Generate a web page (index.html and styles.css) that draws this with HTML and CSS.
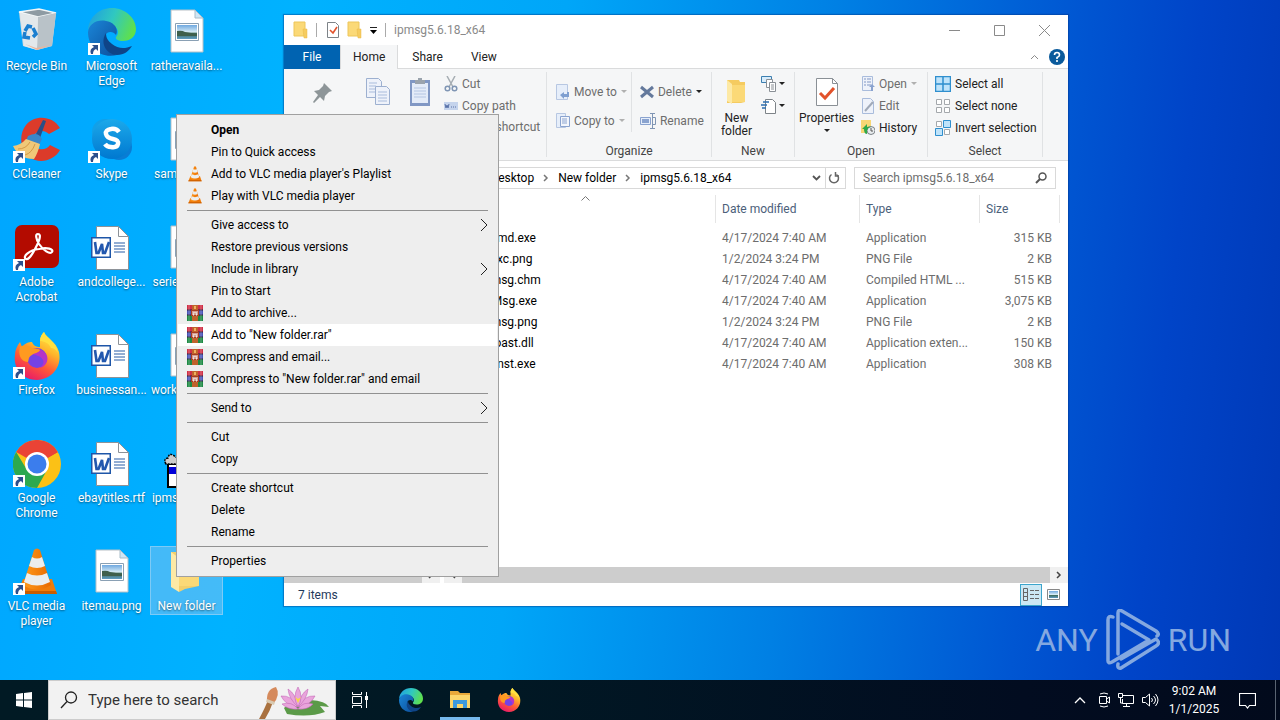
FILE: index.html
```html
<!DOCTYPE html>
<html lang="en">
<head>
  <meta charset="UTF-8">
  <meta name="viewport" content="width=device-width, initial-scale=1.0">
  <title>Desktop</title>
  <link rel="stylesheet" href="styles.css">
</head>
<body>
  <!-- shared icons -->
  <svg class="defs" width="0" height="0">
    <defs>
      <linearGradient id="g-edge1" x1="0" y1="0.2" x2="1" y2="0.5"><stop offset="0" stop-color="#1f9fe0"/><stop offset="0.5" stop-color="#30c8c0"/><stop offset="1" stop-color="#5fe04c"/></linearGradient>
      <linearGradient id="g-edge2" x1="0" y1="0" x2="1" y2="1"><stop offset="0" stop-color="#1a86d8"/><stop offset="1" stop-color="#0d4f9c"/></linearGradient>
      <linearGradient id="g-fox" x1="0.8" y1="0" x2="0.3" y2="1"><stop offset="0" stop-color="#fff44f"/><stop offset="0.35" stop-color="#ffb52a"/><stop offset="0.65" stop-color="#ff5a36"/><stop offset="1" stop-color="#e8186a"/></linearGradient>
      <linearGradient id="g-cone" x1="0" y1="0" x2="1" y2="0"><stop offset="0" stop-color="#ff9a1c"/><stop offset="1" stop-color="#e86a00"/></linearGradient>
      <linearGradient id="g-skype" x1="0" y1="0" x2="0" y2="1"><stop offset="0" stop-color="#1ca9ea"/><stop offset="1" stop-color="#0078d0"/></linearGradient>
      <linearGradient id="g-photo" x1="0" y1="0" x2="0" y2="1"><stop offset="0" stop-color="#6fa8e0"/><stop offset="0.5" stop-color="#d6ebf5"/><stop offset="0.6" stop-color="#3d6a58"/><stop offset="1" stop-color="#5f9cc4"/></linearGradient>
    </defs>
    <symbol id="i-link" viewBox="0 0 12 12">
      <path d="M0 0h12v12H0z" fill="#fff"/><path d="M4 2h6v6L8 6Q5 7 5 11H3Q1 6 6 4z" fill="#2c4f8c"/>
    </symbol>
    <symbol id="i-bin" viewBox="0 0 48 48">
      <path d="M6 4l20-3 17 4-4 33-15 4-14-4z" fill="#d7dce0"/>
      <path d="M6 4l20-3 17 4-18 4z" fill="#8e9ba3" stroke="#f1f5f7" stroke-width="1.500"/>
      <path d="M25 9l18-4-4 33-15 4z" fill="#b9c2c8"/>
      <path d="M7 5l18 4-1 33-13-4z" fill="#e3e8eb"/>
      <g fill="none" stroke="#1b7fd0" stroke-width="3.500"><path d="M12 23l3-5 4 1"/><path d="M20 20l3 6-3 3"/><path d="M17 30l-6-1 1-5"/></g>
      <path d="M12 36l11 4 14-3-13 5z" fill="#e9b59c"/>
    </symbol>
    <symbol id="i-edge" viewBox="0 0 48 48">
      <path d="M0 22C1 9 11 0 24 0s24 10 24 21c0 8-6 12-13 12-5 0-8-2-7-4 5-5 0-13-9-14C9 14 2 17 0 22z" fill="url(#g-edge1)"/>
      <path d="M0 24c1-8 9-13 18-11 8 1 13 8 10 14-2-3-6-4-9-2-5 4-3 18 10 22C12 51 0 39 0 24z" fill="url(#g-edge2)"/>
      <path d="M18 25c-6 9-1 21 11 22 7 0 12-4 15-9-7 3-14 3-20-2-4-3-6-6-6-11z" fill="#0f4487"/>
    </symbol>
    <symbol id="i-png" viewBox="0 0 48 48">
      <path d="M8 2h24l8 8v34H8z" fill="#fff" stroke="#b7c0c6"/><path d="M32 2v8h8z" fill="#cfe6f5" stroke="#a9bcc8"/>
      <path d="M12.500 15.500h23v17h-23z" fill="#fff" stroke="#8aa0b4"/><path d="M14 17h20v14H14z" fill="url(#g-photo)"/><path d="M14 23q5-1 8 1l12 2v2H14z" fill="#3f5f4c"/>
    </symbol>
    <symbol id="i-word" viewBox="0 0 48 48">
      <path d="M8.500 2.500h22l10 10v33h-32z" fill="#fff" stroke="#8d9298"/><path d="M30.500 2.500v10h10z" fill="#fff" stroke="#8d9298"/>
      <path d="M26 19h11M26 22h11M26 25h11M26 28h11" stroke="#2b5fa8" stroke-width="1.200"/>
      <path d="M3 13h20v21H3z" fill="#1e56a8"/><path d="M4.500 14.500h17v18h-17z" fill="#fff"/>
      <path d="M7 18l1.500 11h2L14 20l1 9h2l4-11" fill="none" stroke="#2358ae" stroke-width="2.600"/>
    </symbol>
    <symbol id="i-cc" viewBox="0 0 48 48">
      <path d="M47 12C40 0 22-2 13 9 4 20 8 40 22 44c9 3 20-1 25-10l-10-5c-5 7-15 5-17-3-2-9 9-15 16-8z" fill="#dc3b2a"/>
      <path d="M30 4l3 1-6 17-5-2z" fill="#2a4f86"/><path d="M15 20q10-5 14 3l-3 6-13-4z" fill="#3a87c8"/>
      <path d="M13 23l14 5q-2 9-6 15Q6 43 0 30q8-1 13-7z" fill="#f0c878"/><path d="M5 33q8 0 12-7M12 39q7-2 10-11" stroke="#d49a48" fill="none"/>
    </symbol>
    <symbol id="i-skype" viewBox="0 0 48 48">
      <circle cx="17" cy="16" r="13" fill="#12a0e8"/><circle cx="31" cy="31" r="13" fill="#0a7cd4"/><circle cx="24" cy="23" r="20" fill="url(#g-skype)"/>
      <path d="M31 16q-3-4-8-3-6 1-5 5 1 4 7 5 6 1 5 5-1 4-7 3-4 0-6-3" fill="none" stroke="#fff" stroke-width="4.500"/>
    </symbol>
    <symbol id="i-pdf" viewBox="0 0 48 48">
      <rect x="2" y="1" width="44" height="43" rx="7" fill="#b30b00"/>
      <path d="M13 35c-4-2 3-9 13-10 8-2 15 0 13 3s-9-2-13-8c-3-5-4-10-1-10 4 0 1 8-3 15-3 6-7 11-9 10z" fill="none" stroke="#fff" stroke-width="2.200"/>
    </symbol>
    <symbol id="i-fox" viewBox="0 0 48 48">
      <path d="M27 9c0-4 2-7 4-9 2 6 12 9 15 20 3 14-6 27-22 28C9 48 0 36 2 23c0-5 2-9 5-13l2 5c3-4 7-5 10-5 1 3 4 5 8 5z" fill="url(#g-fox)"/>
      <circle cx="24" cy="26" r="10" fill="#7542e5"/><path d="M15 22c2-6 13-7 18 0 4 6-1 13-6 14 9-8-1-14-12-14z" fill="#b633c8"/>
      <path d="M7 15c5-3 9-1 12 1 3 1 6 0 8 2-1 3-6 3-8 5-4 2-3 5-4 7C7 30 5 21 7 15z" fill="#ff9a20"/>
      <path d="M31 0c2 6 12 9 14 21-2-4-5-5-7-5-2-5-7-7-11-7 0-4 2-7 4-9z" fill="#ffe040"/>
    </symbol>
    <symbol id="i-chrome" viewBox="0 0 48 48">
      <circle cx="24" cy="24" r="24" fill="#fbc116"/><path d="M24 24L3.200 12A24 24 0 0 1 44.800 12z" fill="#ea4335"/><path d="M24 24v-12h21z" fill="#ea4335"/>
      <path d="M14 30L3.200 12A24 24 0 0 0 24 48l10-18z" fill="#2da94f"/>
      <circle cx="24" cy="24" r="12" fill="#fff"/><circle cx="24" cy="24" r="9.500" fill="#3b7ded"/>
    </symbol>
    <symbol id="i-vlc" viewBox="0 0 48 48">
      <path d="M10 31h29l5 15H4z" fill="#f07c0a"/><path d="M5 43h38l1 3H4z" fill="#c95d00"/>
      <path d="M21 2q3-3 6 0l11 35q-14 9-28 0z" fill="url(#g-cone)"/>
      <path d="M19 9q5 3 10 0l3 9q-8 4-16 0zM14 25q10 5 20 0l3 9q-13 7-26 0z" fill="#eceeee"/>
    </symbol>
    <symbol id="i-folder" viewBox="0 0 48 48">
      <path d="M8 4h12l2 4h14v30l-14 3-6 3z" fill="#f3cf6b"/><path d="M8 4l8 6v34l-8-5z" fill="#fde9a5"/><path d="M16 20h20v18H16z" fill="#fbd977"/>
    </symbol>
    <symbol id="i-ipmsg" viewBox="0 0 48 48">
      <path d="M5 23h32v24H5z" fill="#fff" stroke="#000" stroke-width="2"/><path d="M6 27h30v7H6z" fill="#0000d8"/><path d="M4 22h34v3H4z"/>
      <path d="M3 24q-3-5 2-6 1-5 5-3l4 3v6z" fill="#ccc" stroke="#000" stroke-dasharray="2 1" stroke-width="1.500"/>
    </symbol>
    <symbol id="i-rar" viewBox="0 0 16 16">
      <path d="M0 0h16v5H0z" fill="#d02f46"/><path d="M0 5h16v5H0z" fill="#4a55b8"/><path d="M0 10h16v6H0z" fill="#1e8a44"/>
      <path d="M0 5h16M0 10h16" stroke="#30203c"/><path d="M2 0v16M14 0v16" stroke="#fff" stroke-opacity="0.300"/>
      <path d="M5 0h6v16H5z" fill="#c0622b"/><path d="M4 5h8v6H4z" fill="#a83c20"/><path d="M6 6v4h1V7h2v3h1V6" fill="none" stroke="#fff"/><path d="M7 1h2v3H7z" fill="#f0b060"/>
    </symbol>
    <symbol id="i-sfolder" viewBox="0 0 16 18">
      <path d="M1 1h11v14H1z" fill="#fbd977" stroke="#edc65a"/><path d="M10 8h4v9h-3z" fill="#f6cc60" stroke="#e8bb48" stroke-width="0.500"/>
    </symbol>
    <symbol id="i-check" viewBox="0 0 16 18">
      <path d="M2.500 1.500h8l3 3v12h-11z" fill="#fff" stroke="#7d8388"/><path d="M5 9l3 3 4-6" fill="none" stroke="#e2522b" stroke-width="1.600"/>
    </symbol>
    <symbol id="i-down" viewBox="0 0 6 4"><path d="M0 0h6L3 3z" fill="currentColor"/></symbol>
    <symbol id="i-right" viewBox="0 0 8 14"><path d="M1 1l6 6-6 6" fill="none" stroke="currentColor"/></symbol>
    <symbol id="i-crumb" viewBox="0 0 6 8"><path d="M1 1l3 3-3 3" fill="none" stroke="currentColor" stroke-width="1.500"/></symbol>
  </svg>

  <main class="desktop">
    <div class="icons">
      <button class="shortcut"><svg class="pic"><use href="#i-bin"/></svg><span>Recycle Bin</span></button>
      <button class="shortcut"><svg class="pic"><use href="#i-cc"/></svg><svg class="link"><use href="#i-link"/></svg><span>CCleaner</span></button>
      <button class="shortcut"><svg class="pic"><use href="#i-pdf"/></svg><svg class="link"><use href="#i-link"/></svg><span>Adobe Acrobat</span></button>
      <button class="shortcut"><svg class="pic"><use href="#i-fox"/></svg><svg class="link"><use href="#i-link"/></svg><span>Firefox</span></button>
      <button class="shortcut"><svg class="pic"><use href="#i-chrome"/></svg><svg class="link"><use href="#i-link"/></svg><span>Google Chrome</span></button>
      <button class="shortcut"><svg class="pic"><use href="#i-vlc"/></svg><svg class="link"><use href="#i-link"/></svg><span>VLC media player</span></button>
      <button class="shortcut"><svg class="pic"><use href="#i-edge"/></svg><svg class="link"><use href="#i-link"/></svg><span>Microsoft Edge</span></button>
      <button class="shortcut"><svg class="pic"><use href="#i-skype"/></svg><svg class="link"><use href="#i-link"/></svg><span>Skype</span></button>
      <button class="shortcut"><svg class="pic"><use href="#i-word"/></svg><span>andcollege...</span></button>
      <button class="shortcut"><svg class="pic"><use href="#i-word"/></svg><span>businessan...</span></button>
      <button class="shortcut"><svg class="pic"><use href="#i-word"/></svg><span>ebaytitles.rtf</span></button>
      <button class="shortcut"><svg class="pic"><use href="#i-png"/></svg><span>itemau.png</span></button>
      <button class="shortcut"><svg class="pic"><use href="#i-png"/></svg><span>ratheravaila...</span></button>
      <button class="shortcut"><svg class="pic"><use href="#i-png"/></svg><span>samples.jpg</span></button>
      <button class="shortcut"><svg class="pic"><use href="#i-png"/></svg><span>seriesset.jpg</span></button>
      <button class="shortcut"><svg class="pic"><use href="#i-png"/></svg><span>workusers.rtf</span></button>
      <button class="shortcut"><svg class="pic"><use href="#i-ipmsg"/></svg><span>ipmsg5.6.1...</span></button>
      <button class="shortcut selected"><svg class="pic"><use href="#i-folder"/></svg><span>New folder</span></button>
    </div>

    <section class="window">
      <header class="titlebar">
        <svg width="16" height="18"><use href="#i-sfolder"/></svg>
        <i class="bar"></i>
        <svg width="16" height="18"><use href="#i-check"/></svg>
        <svg width="16" height="18"><use href="#i-sfolder"/></svg>
        <svg width="9" height="9" viewBox="0 0 9 9"><path d="M1 1.500h7" stroke="#222"/><path d="M1 4h7L4.500 8z"/></svg>
        <i class="bar"></i>
        <span class="title">ipmsg5.6.18_x64</span>
        <div class="caption">
          <button aria-label="Minimize"><svg width="11" height="11"><path d="M0 5.500h11" stroke="#8a8a8a"/></svg></button>
          <button aria-label="Maximize"><svg width="11" height="11"><path d="M.5.5h10v10H.5z" fill="none" stroke="#8a8a8a"/></svg></button>
          <button aria-label="Close"><svg width="11" height="11"><path d="M0 0l11 11M11 0L0 11" stroke="#8a8a8a"/></svg></button>
        </div>
      </header>
      <nav class="tabs">
        <button class="tab file">File</button>
        <button class="tab active">Home</button>
        <button class="tab">Share</button>
        <button class="tab">View</button>
        <div class="tabs-end">
          <svg width="9" height="6"><path d="M1 5l3.500-3.500L8 5" fill="none" stroke="#8a8a8a"/></svg>
          <svg width="16" height="16" viewBox="0 0 16 16"><circle cx="8" cy="8" r="8" fill="#0a5a9c"/><path d="M5.500 6q0-2.500 2.500-2.500T10.500 6Q10.500 7.500 8 8.500V10M8 11v2" fill="none" stroke="#fff" stroke-width="1.600"/></svg>
        </div>
      </nav>

      <div class="ribbon">
        <div class="group clipboard">
          <div class="tools">
            <button class="big off"><svg width="24" height="32" viewBox="0 0 24 32"><path d="M13 7l8 8-3 1-4 4-1 5-4-4-6 6-1-1 5-7-4-4 5-1 4-4z" fill="#8d9598"/></svg>Pin to Quick access</button>
            <button class="big off"><svg width="26" height="32" viewBox="0 0 26 32"><g fill="#eef2fa" stroke="#9db0d0"><path d="M1.500 2.500h12l3 3v16h-15z"/><path d="M10.500 10.500h11l3 3v15h-14z"/></g><path d="M4 7h8M4 10h7M4 13h6M4 16h6M13 16h9M13 19h9M13 22h9M13 25h9" stroke="#a9bcdc"/></svg>Copy</button>
            <button class="big off"><svg width="24" height="32" viewBox="0 0 24 32"><path d="M2 4h20v26H2z" fill="#8097c4"/><path d="M4 7h16v20H4z" fill="#e3ebf8"/><path d="M7 4h10v4H7zM10 2h4v3h-4z" fill="#9aa3ad"/><path d="M6 12h12M6 15h12M6 18h12M6 21h12" stroke="#b4c5e2"/></svg>Paste</button>
            <div class="stack">
              <button class="off"><svg width="14" height="16" viewBox="0 0 14 16"><path d="M3 0l6 11M11 0L5 11" stroke="#a6adb3" stroke-width="1.500"/><circle cx="3.500" cy="12.500" r="2.300" fill="none" stroke="#7f95b4" stroke-width="1.500"/><circle cx="10.500" cy="12.500" r="2.300" fill="none" stroke="#7f95b4" stroke-width="1.500"/></svg>Cut</button>
              <button class="off"><svg width="14" height="16" viewBox="0 0 14 16"><path d="M0 4h14v8H0z" fill="#c4d3ec"/><path d="M1 6l1 4 1-3 1 3 1-4M7 9h1M9 9h1M11 9h1" stroke="#5871a8" fill="none"/></svg>Copy path</button>
              <button class="off"><svg width="14" height="16" viewBox="0 0 14 16"><path d="M2 2h10v12H2z" fill="#e3ebf8" stroke="#8097c4"/></svg>Paste shortcut</button>
            </div>
          </div>
          <span class="name">Clipboard</span>
        </div>
        <div class="group organize">
          <div class="tools">
            <div class="stack wide">
              <button class="off"><svg width="14" height="16" viewBox="0 0 14 16"><path d="M.5.5h11v15H.5z" fill="#e6eefa" stroke="#b7c7e2"/><path d="M13 8v5H8v2L4 11l4-3v2h3V8z" fill="#7f9fd0"/></svg>Move to<svg class="arr"><use href="#i-down"/></svg></button>
              <button class="off"><svg width="14" height="16" viewBox="0 0 14 16"><path d="M.5.5h9v14H.5z" fill="#e6eefa" stroke="#b7c7e2"/><path d="M4.500 3.500h9v10h-9z" fill="#f3f6fc" stroke="#8aa3cf"/><path d="M6 6h5M6 8h5M6 10h5" stroke="#8aa3cf"/></svg>Copy to<svg class="arr"><use href="#i-down"/></svg></button>
            </div>
            <div class="stack wide second">
              <button class="off"><svg width="14" height="16" viewBox="0 0 14 16"><path d="M1 3l12 10M13 3L1 13" stroke="#64799c" stroke-width="3"/></svg>Delete<svg class="arr dark"><use href="#i-down"/></svg></button>
              <button class="off"><svg width="16" height="16" viewBox="0 0 16 16"><path d="M.5 4.500h10v7H.5z" fill="#e6eefa" stroke="#8aa3cf"/><path d="M2 6h7v4H2z" fill="#8aa3cf"/><path d="M12.500 1v14M10 .5h5M10 15.500h5M13 4.500h2.500v7H13" fill="none" stroke="#7f95b4"/></svg>Rename</button>
            </div>
          </div>
          <span class="name">Organize</span>
        </div>
        <div class="group new">
          <div class="tools">
            <button class="big"><svg width="20" height="32" viewBox="0 0 20 32"><path d="M0 4h12l1 2h5v20l-4 1H0z" fill="#f5cb60"/><path d="M0 4l5 4v20l-5-3z" fill="#fde9a5"/><path d="M5 9h13v17H5z" fill="#fbd977"/></svg><span>New<br>folder</span></button>
            <div class="stack">
              <button aria-label="New item"><svg width="16" height="16" viewBox="0 0 16 16"><path d="M.5.5h10v6H.5z" fill="#d8ecfb" stroke="#3c7fb0"/><path d="M5.500 3.500h6v8h-6z" fill="#fff" stroke="#8a9096"/><path d="M8.500 6.500h6v9h-6z" fill="#fff" stroke="#8a9096"/><path d="M10 9h3M10 11h3M10 13h3" stroke="#8a9096"/></svg><svg class="arr dark"><use href="#i-down"/></svg></button>
              <button aria-label="Easy access"><svg width="16" height="16" viewBox="0 0 16 16"><path d="M4.500 1.500h7l3 3v11h-10z" fill="#fff" stroke="#7d8388"/><path d="M2 4h6M0 7h6M1 10h4" stroke="#2d6fb0" stroke-width="1.500"/></svg><svg class="arr dark"><use href="#i-down"/></svg></button>
            </div>
          </div>
          <span class="name">New</span>
        </div>
        <div class="group open">
          <div class="tools">
            <button class="big"><svg width="22" height="32" viewBox="0 0 22 32"><path d="M.5 2.500h16l5 5v22H.5z" fill="#fff" stroke="#8a9096"/><path d="M16.500 2.500v5h5" fill="none" stroke="#8a9096"/><path d="M4 17l5 5 9-10" fill="none" stroke="#e2522b" stroke-width="3"/></svg>Properties<svg class="arr dark"><use href="#i-down"/></svg></button>
            <div class="stack">
              <button class="off"><svg width="14" height="16" viewBox="0 0 14 16"><path d="M1.500.5h10v14h-10z" fill="#eef2fa" stroke="#a9bcdc"/><path d="M3 3h2M3 6h2M3 9h2M6 3h4M6 6h4M6 9h4" stroke="#8097c4"/><path d="M11 8l3 3h-2v4h-2v-4H8z" fill="#8aa3cf"/></svg>Open<svg class="arr"><use href="#i-down"/></svg></button>
              <button class="off"><svg width="14" height="16" viewBox="0 0 14 16"><path d="M1.500.5h8l3 3v12h-11z" fill="#eef2fa" stroke="#a9bcdc"/><path d="M4 13l8-9" stroke="#a0a9b8" stroke-width="2"/></svg>Edit</button>
              <button><svg width="14" height="16" viewBox="0 0 14 16"><path d="M0 0h10v13H0z" fill="#f8d775"/><circle cx="10" cy="10.500" r="4" fill="#e8ecee" stroke="#7d8388"/><path d="M10 8v3h2" stroke="#555" fill="none"/><path d="M1 9l5-5v3q3-1 4 0-5 1-4 7-3 0-3-5z" fill="#2fa84a"/></svg>History</button>
            </div>
          </div>
          <span class="name">Open</span>
        </div>
        <div class="group select">
          <div class="tools">
            <div class="stack">
              <button><svg width="16" height="16" viewBox="0 0 16 16"><path d="M.5.5h15v15H.5zM8 0v16M0 8h16" fill="#bfe3fa" stroke="#2f8fce" stroke-width="1.500"/></svg>Select all</button>
              <button><svg width="16" height="16" viewBox="0 0 16 16"><path d="M1.500 1.500h5v5h-5zM9.500 1.500h5v5h-5zM1.500 9.500h5v5h-5zM9.500 9.500h5v5h-5z" fill="#fff" stroke="#a4a8ac"/></svg>Select none</button>
              <button><svg width="16" height="16" viewBox="0 0 16 16"><path d="M1.500 1.500h5v5h-5zM9.500 9.500h5v5h-5z" fill="#fff" stroke="#a4a8ac"/><path d="M8.500.5h7v7h-7zM.5 8.500h7v7h-7z" fill="#bfe3fa" stroke="#2f8fce"/></svg>Invert selection</button>
            </div>
          </div>
          <span class="name">Select</span>
        </div>
      </div>

      <div class="navbar">
        <div class="address">
          <svg class="home" width="16" height="18"><use href="#i-sfolder"/></svg>
          <a href="#">This PC</a><svg class="crumb"><use href="#i-crumb"/></svg>
          <a href="#">Desktop</a><svg class="crumb"><use href="#i-crumb"/></svg>
          <a href="#">New folder</a><svg class="crumb"><use href="#i-crumb"/></svg>
          <a href="#">ipmsg5.6.18_x64</a>
          <div class="address-end">
            <svg width="9" height="6"><path d="M1 1l3.500 3.500L8 1" fill="none" stroke="#555" stroke-width="1.800"/></svg>
            <button aria-label="Refresh"><svg width="12" height="12" viewBox="0 0 12 12"><path d="M3.500 2.500a4.500 4.500 0 1 0 5 0" fill="none" stroke="#666" stroke-width="1.500"/><path d="M7.500 0v4H11" fill="none" stroke="#666" stroke-width="1.500"/></svg></button>
          </div>
        </div>
        <label class="search">
          <input type="text" placeholder="Search ipmsg5.6.18_x64" aria-label="Search ipmsg5.6.18_x64">
          <svg width="12" height="12" viewBox="0 0 12 12"><circle cx="7.500" cy="4.500" r="3.500" fill="none" stroke="#555" stroke-width="1.500"/><path d="M5 7l-4 4" stroke="#555" stroke-width="2"/></svg>
        </label>
      </div>

      <div class="panes">
        <aside class="tree">
          <div class="scroll"><i class="thumb"></i><button aria-label="Scroll right"><svg width="6" height="8"><use href="#i-crumb"/></svg></button></div>
        </aside>
        <div class="files">
          <table>
            <thead>
              <tr><th class="c-name" aria-label="Name"><svg width="9" height="5"><path d="M.5 4.500l4-4 4 4" fill="none" stroke="#777"/></svg></th><th class="c-date">Date modified</th><th class="c-type">Type</th><th class="c-size">Size</th></tr>
            </thead>
            <tbody>
              <tr><td>ipcmd.exe</td><td>4/17/2024 7:40 AM</td><td>Application</td><td>315 KB</td></tr>
              <tr><td>ipexc.png</td><td>1/2/2024 3:24 PM</td><td>PNG File</td><td>2 KB</td></tr>
              <tr><td>ipmsg.chm</td><td>4/17/2024 7:40 AM</td><td>Compiled HTML ...</td><td>515 KB</td></tr>
              <tr><td>IPMsg.exe</td><td>4/17/2024 7:40 AM</td><td>Application</td><td>3,075 KB</td></tr>
              <tr><td>ipmsg.png</td><td>1/2/2024 3:24 PM</td><td>PNG File</td><td>2 KB</td></tr>
              <tr><td>iptoast.dll</td><td>4/17/2024 7:40 AM</td><td>Application exten...</td><td>150 KB</td></tr>
              <tr><td>uninst.exe</td><td>4/17/2024 7:40 AM</td><td>Application</td><td>308 KB</td></tr>
            </tbody>
          </table>
          <div class="scroll"><button aria-label="Scroll left"><svg class="flip" width="6" height="8"><use href="#i-crumb"/></svg></button><i class="thumb"></i><button aria-label="Scroll right"><svg width="6" height="8"><use href="#i-crumb"/></svg></button></div>
        </div>
      </div>
      <footer class="status">
        <span>7 items</span>
        <button class="view on" aria-label="Details"><svg width="16" height="13" viewBox="0 0 16 13"><g fill="none" stroke="#666"><path d="M.5.5h4v12h-4zM0 4.500h5M0 8.500h5"/><path d="M7 2.500h4M12 2.500h4M7 6.500h4M12 6.500h4M7 10.500h4M12 10.500h4"/></g></svg></button>
        <button class="view" aria-label="Large icons"><svg width="13" height="11" viewBox="0 0 13 11"><path d="M.5.5h12v10H.5z" fill="#fff" stroke="#888"/><path d="M2 2h9v7H2z" fill="url(#g-photo)"/></svg></button>
      </footer>
    </section>

    <div class="menu" role="menu">
      <button role="menuitem" class="default">Open</button>
      <button role="menuitem">Pin to Quick access</button>
      <button role="menuitem"><svg class="ico"><use href="#i-vlc"/></svg>Add to VLC media player's Playlist</button>
      <button role="menuitem"><svg class="ico"><use href="#i-vlc"/></svg>Play with VLC media player</button>
      <hr>
      <button role="menuitem">Give access to<svg class="sub"><use href="#i-right"/></svg></button>
      <button role="menuitem">Restore previous versions</button>
      <button role="menuitem">Include in library<svg class="sub"><use href="#i-right"/></svg></button>
      <button role="menuitem">Pin to Start</button>
      <button role="menuitem"><svg class="ico"><use href="#i-rar"/></svg>Add to archive...</button>
      <button role="menuitem" class="hover"><svg class="ico"><use href="#i-rar"/></svg>Add to "New folder.rar"</button>
      <button role="menuitem"><svg class="ico"><use href="#i-rar"/></svg>Compress and email...</button>
      <button role="menuitem"><svg class="ico"><use href="#i-rar"/></svg>Compress to "New folder.rar" and email</button>
      <hr>
      <button role="menuitem">Send to<svg class="sub"><use href="#i-right"/></svg></button>
      <hr>
      <button role="menuitem">Cut</button>
      <button role="menuitem">Copy</button>
      <hr>
      <button role="menuitem">Create shortcut</button>
      <button role="menuitem">Delete</button>
      <button role="menuitem">Rename</button>
      <hr>
      <button role="menuitem">Properties</button>
    </div>

    <div class="watermark">
      <span>ANY</span>
      <svg width="54" height="62" viewBox="0 0 54 62"><g fill="none" stroke="#84a8e0" stroke-width="3.500" stroke-linejoin="round" stroke-linecap="round"><path d="M7 8q-5-2-5 3v41q0 3 4 1l37-22-27-16"/><path d="M12 45V4q0-4 4-2l34 20q4 3 1 5"/><path d="M15 50l35-20q5 4 0 7L15 59q-4 1-3-4"/></g></svg>
      <span>RUN</span>
    </div>
  </main>

  <footer class="taskbar">
    <button class="start" aria-label="Start"><svg width="16" height="16" viewBox="0 0 16 16"><path d="M0 2l7-1v6.500H0zM8 1l8-1v7.500H8zM0 8.500h7V15l-7-1zM8 8.500h8V16l-8-1z" fill="#fff"/></svg></button>
    <label class="find">
      <svg width="18" height="18" viewBox="0 0 18 18"><circle cx="11" cy="6.500" r="5.500" fill="none" stroke="#222" stroke-width="1.300"/><path d="M7 10.500L1 17" stroke="#222" stroke-width="1.300"/></svg>
      <input type="text" placeholder="Type here to search" aria-label="Type here to search">
      <svg class="art" width="74" height="34" viewBox="0 0 74 34">
        <path d="M1 34q6-11 9-19l5 2q-3 9-8 17z" fill="#a9713f"/><path d="M9 17q-1-13 9-15 5 8-3 17z" fill="#d58a5c"/><path d="M9 14l8 3-1 3-8-3z" fill="#d8c9b0"/>
        <path d="M26 23q8-8 26-8 16 1 19 7l-9-1 5 6q-16 6-38 2z" fill="#5b9a48"/>
        <g fill="#e9a4dc" stroke="#c469b8" stroke-width="0.600"><path d="M40 22Q28 21 23 11q11-1 17 11z"/><path d="M40 22Q52 21 57 11q-11-1-17 11z"/><path d="M40 22Q31 14 30 4q8 5 10 18z"/><path d="M40 22Q49 14 50 4q-8 5-10 18z"/><path d="M40 22q-6-10 0-20 6 10 0 20z"/><path d="M40 24q-10 1-16-5 10-3 16 5zM40 24q10 1 15-5-10-3-15 5z"/></g>
        <path d="M37 12l3 6 3-6-3 2z" fill="#f7d94a"/>
      </svg>
    </label>
    <button class="app" aria-label="Task View"><svg width="18" height="16" viewBox="0 0 18 16"><g fill="none" stroke="#fff"><path d="M1.500 4.500h9v7h-9zM1.500 0v2.500h9V0M1.500 16v-2.500h9V16M15.500 0v16"/></g><path d="M14 4h3v4h-3z" fill="#fff"/></svg></button>
    <button class="app" aria-label="Edge"><svg width="24" height="24"><use href="#i-edge"/></svg></button>
    <button class="app running" aria-label="File Explorer"><svg width="22" height="20" viewBox="0 0 22 20"><path d="M1 1h8l2 2h10v14H1z" fill="#e9a93a"/><path d="M1 5h20v13H1z" fill="#fcd66b"/><path d="M4 10h14v8h-4v-4H8v4H4z" fill="#3d9ade"/></svg></button>
    <button class="app" aria-label="Firefox"><svg width="24" height="24"><use href="#i-fox"/></svg></button>
    <div class="tray">
      <svg class="more" width="12" height="7"><path d="M1 6l5-5 5 5" fill="none" stroke="#fff" stroke-width="1.300"/></svg>
      <svg width="12" height="16" viewBox="0 0 12 16"><g fill="none" stroke="#fff"><path d="M1.500 4.500h7v7h-7zM8.500 7l3-2v6l-3-2M2 2q4-2 8 0M2 14q4 2 8 0"/></g></svg>
      <svg width="16" height="14" viewBox="0 0 16 14"><g fill="none" stroke="#fff"><path d="M5 2.500h10.500v8H4.500V6M8.500 10.500v3M5 13.500h7M.5.500h4v4h-4zM2.500 5v5H5"/></g></svg>
      <svg width="17" height="14" viewBox="0 0 17 14"><g fill="none" stroke="#fff"><path d="M.5 4.500h3l4-3.500v12l-4-3.500h-3zM9.500 5q2 2 0 4M11.500 3q4 4 0 8M13.500 1q5 6 0 12"/></g></svg>
      <div class="clock"><span>9:02 AM</span><span>1/1/2025</span></div>
      <button aria-label="Notifications"><svg width="17" height="17" viewBox="0 0 17 17"><path d="M.5 1.500h16v12h-6l-2 2.500-2-2.500h-6z" fill="none" stroke="#fff" stroke-width="1.200"/></svg></button>
      <i class="peek"></i>
    </div>
  </footer>
</body>
</html>
```
FILE: styles.css
```css
* {
  box-sizing: border-box;
}
body {
  margin: 0;
  height: 100vh;
  display: flex;
  flex-direction: column;
  overflow: hidden;
  font-family: Roboto, "Open Sans", sans-serif;
  font-size: 12px;
  line-height: 16px;
  color: #000;
}
button, input {
  font: inherit;
  color: inherit;
  background: none;
  border: none;
  padding: 0;
  margin: 0;
}
a {
  color: inherit;
  text-decoration: none;
}
svg {
  flex: none;
  display: block;
}
.defs {
  position: absolute;
}

/* Desktop */
.desktop {
  position: relative;
  flex: 1;
  min-height: 0;
  padding-top: 6px;
  background: linear-gradient(96deg, #00a6ff 0%, #00b2ff 22%, #00a6f8 42%, #0080e4 62%, #0056d2 80%, #0044c8 89%, #0038b6 100%);
}
.icons {
  display: grid;
  grid-auto-flow: column;
  grid-template-rows: repeat(6, 108px);
  grid-auto-columns: 75px;
  align-items: start;
}
.shortcut {
  position: relative;
  width: 73px;
  padding: 1px 0 0;
  border: 1px solid transparent;
  display: flex;
  flex-direction: column;
  align-items: center;
  gap: 3px;
  line-height: 15px;
  color: #fff;
  text-shadow: 0 1px 2px rgba(0, 0, 0, 0.5);
}
.shortcut .pic {
  width: 48px;
  height: 48px;
}
.shortcut .link {
  position: absolute;
  left: 12px;
  top: 36px;
  width: 12px;
  height: 12px;
}
.shortcut.selected {
  background: rgba(150, 200, 240, 0.45);
  border-color: rgba(150, 210, 245, 0.7);
}

/* Explorer window */
.window {
  position: absolute;
  left: 284px;
  top: 15px;
  width: 784px;
  height: 591px;
  display: flex;
  flex-direction: column;
  background: #fff;
  box-shadow: 0 0 1px 1px rgba(0, 50, 130, 0.4);
}
.titlebar {
  height: 30px;
  padding-left: 9px;
  display: flex;
  align-items: center;
  gap: 6px;
}
.titlebar .bar {
  width: 1px;
  height: 14px;
  background: #aaa;
  margin: 0 2px 0 1px;
}
.title {
  color: #8a8a8a;
}
.caption {
  margin-left: auto;
  padding-right: 1px;
  display: flex;
  height: 30px;
}
.caption button {
  width: 45px;
  display: flex;
  align-items: center;
  justify-content: center;
}
.tabs {
  height: 24px;
  display: flex;
  border-bottom: 1px solid #dadbdc;
}
.tab {
  padding: 0 14px;
  height: 24px;
  color: #222;
}
.tab.file {
  width: 56px;
  background: #0063b1;
  color: #fff;
}
.tab.active {
  padding: 0 12px;
  background: #f5f6f7;
  border: 1px solid #dadbdc;
  border-bottom: none;
  border-top: none;
}
.tabs-end {
  margin-left: auto;
  padding-right: 3px;
  display: flex;
  align-items: center;
  gap: 10px;
}
.ribbon {
  height: 92px;
  display: flex;
  background: #f5f6f7;
  border-bottom: 1px solid #dadbdc;
}
.group {
  margin: 3px 0;
  border-right: 1px solid #e0e2e4;
  display: flex;
  flex-direction: column;
  justify-content: space-between;
  color: #222;
}
.group .name {
  text-align: center;
  line-height: 12px;
  color: #444;
}
.tools {
  display: flex;
}
.stack {
  display: flex;
  flex-direction: column;
  padding-top: 1px;
}
.stack button {
  height: 22px;
  display: flex;
  align-items: center;
  gap: 4px;
  white-space: nowrap;
}
.stack.wide {
  padding-top: 9px;
  gap: 7px;
}
.off {
  color: #6d6d6d;
}
.arr {
  width: 6px;
  height: 4px;
  color: #b0b0b0;
}
.arr.dark {
  color: #222;
}
.big {
  display: flex;
  flex-direction: column;
  align-items: center;
  gap: 4px;
  padding-top: 4px;
  line-height: 13px;
}
.clipboard { width: 263px; }
.clipboard .tools { padding-left: 12px; height: 66px; }
.clipboard .big { width: 50px; gap: 8px; }
.clipboard .big:first-child { width: 54px; margin-right: 3px; }
.clipboard .big + .big + .big { width: 34px; }
.clipboard .stack { margin-left: 7px; }
.organize { width: 165px; }
.organize .tools { padding-left: 9px; }
.organize .second { margin-left: 4px; padding-left: 8px; border-left: 1px solid #e0e2e4; }
.new { width: 83px; }
.new .big { width: 49px; }
.new .stack button { gap: 2px; }
.open { width: 133px; }
.open .big { width: 63px; }
.open .stack { margin-left: 3px; }
.select { width: 115px; }
.select .tools { padding-left: 7px; }

.navbar {
  display: flex;
  gap: 8px;
  padding: 6px 12px 6px 94px;
}
.address {
  flex: 1;
  height: 22px;
  border: 1px solid #d9d9d9;
  display: flex;
  align-items: center;
  padding-left: 4px;
}
.address .home {
  margin-right: 26px;
}
.crumb {
  width: 6px;
  height: 8px;
  margin: 0 9px;
  color: #777;
}
.address-end {
  margin-left: auto;
  height: 20px;
  display: flex;
  align-items: center;
  gap: 4px;
}
.address-end button {
  width: 20px;
  height: 20px;
  padding-left: 2px;
  border-left: 1px solid #d9d9d9;
}
.search {
  width: 202px;
  height: 22px;
  border: 1px solid #d9d9d9;
  padding: 0 8px;
  display: flex;
  align-items: center;
}
.search input {
  flex: 1;
  min-width: 0;
}
.search input::placeholder {
  color: #6d6d6d;
  opacity: 1;
}

.panes {
  flex: 1;
  min-height: 0;
  display: flex;
  gap: 4px;
}
.tree {
  width: 156px;
  display: flex;
  flex-direction: column;
  justify-content: flex-end;
}
.files {
  flex: 1;
  display: flex;
  flex-direction: column;
  justify-content: space-between;
}
.scroll {
  height: 16px;
  display: flex;
  background: #f0f0f0;
}
.scroll .thumb {
  flex: 1;
  background: #cdcdcd;
}
.scroll button {
  width: 18px;
  display: flex;
  align-items: center;
  justify-content: center;
  color: #444;
}
.flip {
  transform: rotate(180deg);
}
table {
  margin: 0 8px 0 13px;
  border-spacing: 0;
  table-layout: fixed;
}
th {
  height: 28px;
  padding: 0 0 0 6px;
  border-right: 1px solid #e5e5e5;
  text-align: left;
  font-weight: normal;
  color: #4c607a;
}
.c-name svg {
  margin: 0 auto 21px 118px;
}
.c-date { width: 144px; }
.c-type { width: 120px; }
.c-size { width: 80px; }
tbody::before {
  content: "";
  display: block;
  height: 4px;
}
td {
  height: 21px;
  padding: 0 8px 0 6px;
  color: #6d6d6d;
  white-space: nowrap;
}
td:first-child {
  padding-left: 24px;
  color: #000;
}
td:last-child {
  text-align: right;
}
.status {
  height: 23px;
  padding: 0 4px 0 14px;
  display: flex;
  align-items: center;
  color: #1e395b;
}
.status span {
  margin-right: auto;
}
.view {
  width: 22px;
  height: 22px;
  display: flex;
  align-items: center;
  justify-content: center;
}
.view.on {
  background: #cce8f4;
  border: 1px solid #3ca5cc;
}

/* Context menu */
.menu {
  position: absolute;
  left: 176px;
  top: 114px;
  width: 323px;
  padding: 4px 1px;
  background: #eee;
  border: 1px solid #a0a0a0;
}
.menu button {
  width: 100%;
  height: 22px;
  padding: 0 9px 0 33px;
  display: flex;
  align-items: center;
  text-align: left;
}
.menu button:has(.ico) {
  padding-left: 9px;
}
.menu .ico {
  width: 16px;
  height: 16px;
  margin-right: 8px;
}
.menu .sub {
  width: 8px;
  height: 14px;
  margin-left: auto;
  color: #222;
}
.menu .default {
  font-weight: bold;
}
.menu .hover {
  background: #fff;
}
.menu hr {
  height: 1px;
  margin: 3px 9px;
  border: none;
  background: #919191;
}

.watermark {
  position: absolute;
  right: 49px;
  bottom: 9px;
  display: flex;
  align-items: center;
  gap: 8px;
  font-size: 32px;
  line-height: 60px;
  color: #84a8e0;
}

/* Taskbar */
.taskbar {
  height: 40px;
  display: flex;
  background: linear-gradient(90deg, #011a24 0%, #011824 40%, #020c20 80%, #020a1c 100%);
  color: #fff;
}
.taskbar button {
  display: flex;
  align-items: center;
  justify-content: center;
}
.start {
  width: 48px;
}
.find {
  width: 288px;
  padding-left: 11px;
  border: 1px solid #ccc;
  background: #f2f2f2;
  display: flex;
  align-items: center;
  gap: 10px;
}
.find input {
  flex: 1;
  min-width: 0;
  font-size: 15px;
}
.find input::placeholder {
  color: #333;
  opacity: 1;
}
.find .art {
  align-self: flex-end;
  margin-right: 3px;
}
.app {
  width: 48px;
  border-bottom: 3px solid transparent;
  border-top: 3px solid transparent;
}
.app:nth-of-type(3) {
  margin-left: 3px;
}
.running {
  width: 40px;
  margin: 0 5px;
  border-bottom-color: #76b9ed;
}
.tray {
  margin-left: auto;
  display: flex;
  align-items: center;
  gap: 8px;
}
.tray .more {
  margin-right: 4px;
}
.clock {
  width: 54px;
  display: flex;
  flex-direction: column;
  align-items: center;
  line-height: 18px;
  margin-right: 10px;
}
.peek {
  width: 1px;
  height: 40px;
  margin: 0 4px 0 11px;
  background: #5a6472;
}
```
